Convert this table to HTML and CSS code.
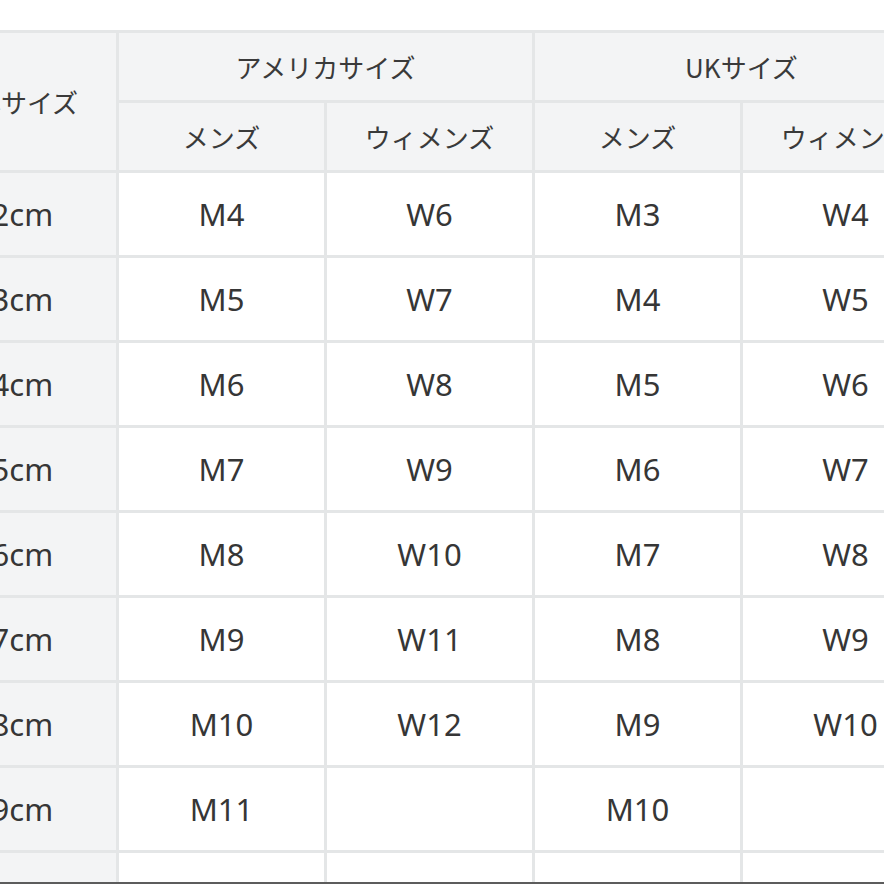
FILE: index.html
```html
<!DOCTYPE html>
<html lang="ja">
<head>
<meta charset="utf-8">
<title>サイズ表</title>
<link rel="stylesheet" href="styles.css">
</head>
<body>
<div class="viewport">
  <div class="chart" role="table">
    <div class="cell head corner">日本サイズ</div>
    <div class="cell head span2">アメリカサイズ</div>
    <div class="cell head span2">UKサイズ</div>
    <div class="cell head">メンズ</div>
    <div class="cell head">ウィメンズ</div>
    <div class="cell head">メンズ</div>
    <div class="cell head">ウィメンズ</div>

    <div class="cell side">22cm</div><div class="cell">M4</div><div class="cell">W6</div><div class="cell">M3</div><div class="cell">W4</div>
    <div class="cell side">23cm</div><div class="cell">M5</div><div class="cell">W7</div><div class="cell">M4</div><div class="cell">W5</div>
    <div class="cell side">24cm</div><div class="cell">M6</div><div class="cell">W8</div><div class="cell">M5</div><div class="cell">W6</div>
    <div class="cell side">25cm</div><div class="cell">M7</div><div class="cell">W9</div><div class="cell">M6</div><div class="cell">W7</div>
    <div class="cell side">26cm</div><div class="cell">M8</div><div class="cell">W10</div><div class="cell">M7</div><div class="cell">W8</div>
    <div class="cell side">27cm</div><div class="cell">M9</div><div class="cell">W11</div><div class="cell">M8</div><div class="cell">W9</div>
    <div class="cell side">28cm</div><div class="cell">M10</div><div class="cell">W12</div><div class="cell">M9</div><div class="cell">W10</div>
    <div class="cell side">29cm</div><div class="cell">M11</div><div class="cell"></div><div class="cell">M10</div><div class="cell"></div>
    <div class="cell side">30cm</div><div class="cell">M12</div><div class="cell"></div><div class="cell">M11</div><div class="cell"></div>
  </div>
</div>
</body>
</html>
```
FILE: styles.css
```css
html, body {
  margin: 0;
  padding: 0;
  background: #ffffff;
}

.viewport {
  width: 884px;
  height: 882px;
  overflow: hidden;
  border-bottom: 2px solid #5c5c5c;
  background: #ffffff;
}

.chart {
  display: grid;
  grid-template-columns: repeat(5, 208px);
  grid-template-rows: 70px 70px repeat(9, 85px);
  margin-top: 30px;
  margin-left: -92px;
  width: max-content;
  border-top: 3px solid #e4e6e7;
  border-left: 3px solid #e4e6e7;
  font-family: "Noto Sans", "Noto Sans CJK JP", sans-serif;
  color: #363636;
}

.cell {
  box-sizing: border-box;
  display: flex;
  align-items: center;
  justify-content: center;
  border-right: 3px solid #e4e6e7;
  border-bottom: 3px solid #e4e6e7;
  background: #ffffff;
  font-size: 31px;
  white-space: nowrap;
}

.head {
  background: #f3f4f5;
  font-family: "Noto Sans CJK JP", sans-serif;
  font-size: 26px;
  color: #3a3a3a;
}

.corner {
  grid-row: span 2;
}

.span2 {
  grid-column: span 2;
}

.side {
  background: #f3f4f5;
}
```
